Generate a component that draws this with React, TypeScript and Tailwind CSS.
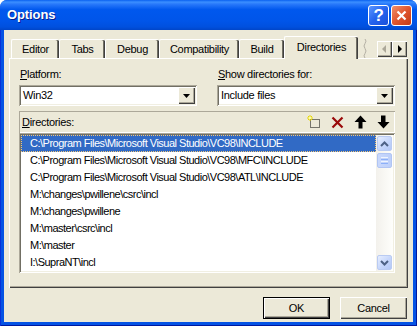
import React from 'react';

const tabs = [
  { label: 'Editor', w: 'w-[48px]' },
  { label: 'Tabs', w: 'w-[46px]' },
  { label: 'Debug', w: 'w-[54px]' },
  { label: 'Compatibility', w: 'w-[80px]' },
  { label: 'Build', w: 'w-[45px]' },
];

const dirs = [
  'C:\\Program Files\\Microsoft Visual Studio\\VC98\\INCLUDE',
  'C:\\Program Files\\Microsoft Visual Studio\\VC98\\MFC\\INCLUDE',
  'C:\\Program Files\\Microsoft Visual Studio\\VC98\\ATL\\INCLUDE',
  'M:\\changes\\pwillene\\csrc\\incl',
  'M:\\changes\\pwillene',
  'M:\\master\\csrc\\incl',
  'M:\\master',
  'I:\\SupraNT\\incl',
];

function DownTriangle() {
  return (
    <svg width="7" height="4" viewBox="0 0 7 4">
      <path d="M0 0H7L3.5 4Z" fill="#000" />
    </svg>
  );
}

function Combo({ value }: { value: string }) {
  return (
    <div className="mt-[4px] h-[21px] flex bg-white p-[2px] shadow-[inset_1px_1px_0_#ACA899,inset_-1px_-1px_0_#fff,inset_2px_2px_0_#716F64,inset_-2px_-2px_0_#F1EFE2]">
      <div className="flex-1 pl-[2px] leading-[17px]">{value}</div>
      <div className="w-[17px] h-[17px] bg-[#ECE9D8] flex items-center justify-center shadow-[inset_1px_1px_0_#fff,inset_-1px_-1px_0_#404040,inset_-2px_-2px_0_#ACA899]">
        <DownTriangle />
      </div>
    </div>
  );
}

function ScrollButton({ up }: { up?: boolean }) {
  return (
    <div className="h-[17px] p-px">
      <div className="h-full rounded-[2px] border border-[#BACBF2] bg-[linear-gradient(135deg,#E6EEFF,#C3D4FB_60%,#B4C8F6)] flex items-center justify-center">
        <svg width="9" height="6" viewBox="0 0 9 6">
          {up ? (
            <path d="M1 5L4.5 1.5L8 5" stroke="#4D6185" strokeWidth="2" fill="none" />
          ) : (
            <path d="M1 1L4.5 4.5L8 1" stroke="#4D6185" strokeWidth="2" fill="none" />
          )}
        </svg>
      </div>
    </div>
  );
}

function Scrollbar() {
  return (
    <div className="w-[17px] h-[136px] flex flex-col bg-[linear-gradient(to_right,#F3F1EC,#FEFEFB)]">
      <ScrollButton up />
      <div className="h-[17px] p-px">
        <div className="h-full rounded-[2px] border border-[#B1C5F3] bg-[linear-gradient(to_right,#C9D8FC,#BCCFFA)] flex flex-col items-center justify-center gap-px">
          <div className="w-[7px] h-px bg-[#EEF4FE]" />
          <div className="w-[7px] h-px bg-[#8CB0F8]" />
          <div className="w-[7px] h-px bg-[#EEF4FE]" />
          <div className="w-[7px] h-px bg-[#8CB0F8]" />
        </div>
      </div>
      <div className="flex-1" />
      <ScrollButton />
    </div>
  );
}

function NewIcon() {
  return (
    <svg width="14" height="14" viewBox="0 0 14 14">
      <rect x="3.5" y="4.5" width="9" height="8" fill="none" stroke="#000" strokeDasharray="1 1" />
      <path d="M0 3H6M3 0V6M1 1L5 5M5 1L1 5" stroke="#E8D800" strokeWidth="1" />
      <rect x="2" y="2" width="2" height="2" fill="#FFFFA0" />
    </svg>
  );
}

function DeleteIcon() {
  return (
    <svg width="13" height="13" viewBox="0 0 13 13">
      <path d="M1.5 1.5L11.5 11.5M11.5 1.5L1.5 11.5" stroke="#9A0A0A" strokeWidth="2.2" />
    </svg>
  );
}

function UpIcon() {
  return (
    <svg width="13" height="14" viewBox="0 0 13 14">
      <path d="M6.5 0.5L12.5 7H8.5V13.5H4.5V7H0.5Z" fill="#000" />
    </svg>
  );
}

function DownIcon() {
  return (
    <svg width="13" height="14" viewBox="0 0 13 14">
      <path d="M6.5 13.5L12.5 7H8.5V0.5H4V7H0.5Z" fill="#000" />
    </svg>
  );
}

export default function App() {
  return (
    <div className="w-[417px] h-[326px] bg-white font-['Liberation_Sans',Arial,sans-serif] text-[11px] tracking-[-0.3px] text-black">
      <div className="w-full h-full flex flex-col rounded-t-[7px] overflow-hidden bg-[#0553E4]">
        {/* title bar */}
        <div className="h-[30px] flex items-center pl-[7px] pr-[5px] bg-[linear-gradient(to_bottom,#0A61F0_0%,#3B8FFF_7%,#2878FA_14%,#0058EE_32%,#0055E9_70%,#0050DE_90%,#0045C8_100%)]">
          <span className="text-white font-bold text-[13px] tracking-[-0.1px] pb-[1px] [text-shadow:1px_1px_0_#0A1E8C]">
            Options
          </span>
          <div className="ml-auto flex gap-[2px]">
            <div className="w-[21px] h-[21px] rounded-[3px] border border-white bg-[linear-gradient(135deg,#5A96FF,#2463EE_50%,#1A50DA)] flex items-center justify-center text-white font-bold text-[17px] leading-none">
              ?
            </div>
            <div className="w-[21px] h-[21px] rounded-[3px] border border-white bg-[linear-gradient(135deg,#F0906A,#E0552E_50%,#C23A16)] flex items-center justify-center">
              <svg width="11" height="11" viewBox="0 0 11 11">
                <path d="M1.5 1.5L9.5 9.5M9.5 1.5L1.5 9.5" stroke="#fff" strokeWidth="2.2" />
              </svg>
            </div>
          </div>
        </div>

        {/* frame + client */}
        <div className="flex-1 px-[4px] pb-[4px] shadow-[inset_1px_0_0_#0831D9,inset_-1px_0_0_#0019A0,inset_0_-1px_0_#0019A0]">
          <div className="h-full bg-[#ECE9D8] flex flex-col">
            {/* tab strip */}
            <div className="relative z-10 mt-[6px] h-[22px] flex items-end pl-[7px]">
              {tabs.map((t) => (
                <div
                  key={t.label}
                  className={`${t.w} h-[19px] flex items-center justify-center rounded-t-[2px] border-l border-t border-white shadow-[inset_-1px_0_0_#404040,inset_-2px_0_0_#716F64]`}
                >
                  {t.label}
                </div>
              ))}
              <div className="w-[74px] h-[23px] -mb-px pb-[2px] flex items-center justify-center rounded-t-[2px] bg-[#ECE9D8] border-l border-t border-white shadow-[inset_-1px_0_0_#404040,inset_-2px_0_0_#716F64]">
                Directories
              </div>
              <div className="w-[12px] h-[19px]">
                <svg width="12" height="19" viewBox="0 0 12 19">
                  <path d="M7 0Q9 2 7 4.5Q5 7 7 9.5Q9 12 7 14.5Q5 17 7 19" stroke="#B4B0A4" fill="none" />
                </svg>
              </div>
              <div className="ml-[7px] mb-[1px] flex">
                <div className="w-[15px] h-[16px] flex items-center justify-center shadow-[inset_1px_1px_0_#fff,inset_-1px_-1px_0_#404040,inset_-2px_-2px_0_#ACA899]">
                  <svg width="5" height="8" viewBox="0 0 5 8">
                    <path d="M4 0V8L0 4Z" fill="#ACA899" />
                  </svg>
                </div>
                <div className="w-[15px] h-[16px] flex items-center justify-center shadow-[inset_1px_1px_0_#fff,inset_-1px_-1px_0_#404040,inset_-2px_-2px_0_#ACA899]">
                  <svg width="5" height="8" viewBox="0 0 5 8">
                    <path d="M1 0V8L5 4Z" fill="#000" />
                  </svg>
                </div>
              </div>
            </div>

            {/* tab panel */}
            <div className="ml-[5px] w-[399px] h-[230px] border-l border-t border-white pl-[9px] pt-[8px] shadow-[inset_-1px_-1px_0_#404040,inset_-2px_-2px_0_#ACA899]">
              <div className="grid grid-cols-[178px_178px] gap-x-[20px]">
                <div>
                  <div className="h-[14px] leading-[14px] pl-px">
                    <span className="underline underline-offset-[1px]">P</span>latform:
                  </div>
                  <Combo value="Win32" />
                </div>
                <div>
                  <div className="h-[14px] leading-[14px] pl-px">
                    <span className="underline underline-offset-[1px]">S</span>how directories for:
                  </div>
                  <Combo value="Include files" />
                </div>
              </div>

              <div className="mt-[5px] w-[376px]">
                <div className="h-[22px] flex items-center pl-[3px] pr-[5px] shadow-[inset_1px_1px_0_#ACA899,inset_-1px_-1px_0_#fff]">
                  <span>
                    <span className="underline underline-offset-[1px]">D</span>irectories:
                  </span>
                  <div className="ml-auto flex items-center gap-[10px]">
                    <NewIcon />
                    <DeleteIcon />
                    <UpIcon />
                    <DownIcon />
                  </div>
                </div>
                <div className="h-[140px] flex bg-white p-[2px] shadow-[inset_1px_1px_0_#ACA899,inset_-1px_-1px_0_#fff,inset_2px_2px_0_#716F64,inset_-2px_-2px_0_#F1EFE2]">
                  <div className="flex-1 h-[136px] overflow-hidden tracking-[-0.5px]">
                    {dirs.map((d, i) =>
                      i === 0 ? (
                        <div
                          key={d}
                          className="h-[17px] pl-[8px] leading-[15px] whitespace-nowrap bg-[#316AC5] text-white border border-dotted border-[#F2C77A]"
                        >
                          {d}
                        </div>
                      ) : (
                        <div key={d} className="h-[17px] pl-[9px] leading-[17px] whitespace-nowrap">
                          {d}
                        </div>
                      )
                    )}
                  </div>
                  <Scrollbar />
                </div>
              </div>
            </div>

            {/* buttons */}
            <div className="mt-[9px] flex justify-end gap-[10px] pr-[6px]">
              <div className="w-[67px] h-[22px] border border-black">
                <div className="h-full flex items-center justify-center shadow-[inset_1px_1px_0_#fff,inset_-1px_-1px_0_#404040,inset_-2px_-2px_0_#ACA899]">
                  OK
                </div>
              </div>
              <div className="w-[67px] h-[22px] flex items-center justify-center shadow-[inset_1px_1px_0_#fff,inset_-1px_-1px_0_#404040,inset_-2px_-2px_0_#ACA899]">
                Cancel
              </div>
            </div>
          </div>
        </div>
      </div>
    </div>
  );
}
